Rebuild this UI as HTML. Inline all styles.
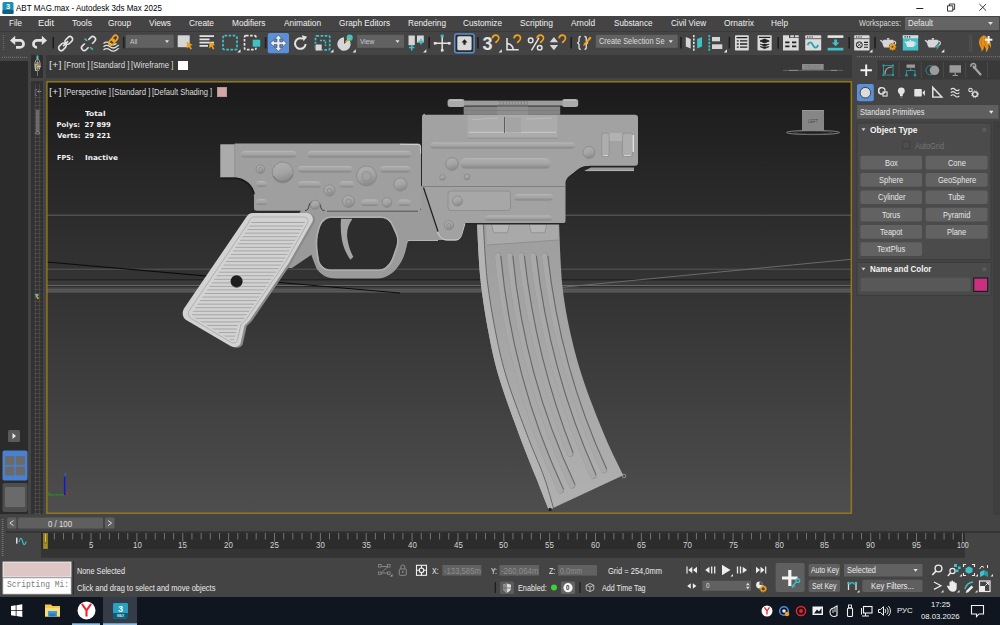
<!DOCTYPE html>
<html lang="en">
<head>
<meta charset="utf-8">
<title>ABT MAG.max - Autodesk 3ds Max 2025</title>
<style>
*{box-sizing:border-box;margin:0;padding:0}
html,body{width:1000px;height:625px;overflow:hidden;background:#444}
body{position:relative;font-family:"Liberation Sans",sans-serif;font-size:8.4px;color:#e6e6e6;line-height:1}
.a{position:absolute}
.t{position:absolute;white-space:pre;line-height:12px;height:12px;transform-origin:0 50%}
svg{position:absolute;overflow:visible}
</style>
</head>
<body>
<div class="a" style="left:0px;top:0px;width:1000px;height:16px;background:#fff;"></div>
<svg style="left:2px;top:2px;" width="12" height="12" viewBox="0 0 12 12"><rect x="0.5" y="0" width="11" height="12" rx="1.5" fill="#1c8fb4"/><rect x="0.5" y="8" width="11" height="4" rx="1" fill="#0f5f7d"/><text x="6" y="7.3" font-size="7.5" font-weight="700" fill="#fff" text-anchor="middle" font-family="Liberation Sans,sans-serif">3</text></svg>
<div class="t" style="left:16px;top:2.3px;font-size:8.6px;color:#000;transform:scaleX(0.932);">ABT MAG.max - Autodesk 3ds Max 2025</div>
<svg style="left:916px;top:3px;" width="72" height="9" viewBox="0 0 72 9"><path d="M0.300 5.500h7" stroke="#222" stroke-width="1" fill="none"/><path d="M31.500 2.800h5.300v5.300h-5.300zM33.300 2.800v-1.800h5.300v5.300h-1.800" stroke="#222" stroke-width="0.900" fill="none"/><path d="M63.400 1l6.700 6.700M70.100 1l-6.700 6.700" stroke="#222" stroke-width="0.900" fill="none"/></svg>
<div class="a" style="left:0px;top:16px;width:1000px;height:15px;background:#444;"></div>
<div class="a" style="left:0px;top:31px;width:1000px;height:1px;background:#3a3a3a;"></div>
<div class="t" style="left:9px;top:17.3px;font-size:8.5px;color:#f0f0f0;transform:scaleX(0.949);">File</div>
<div class="t" style="left:38px;top:17.3px;font-size:8.5px;color:#f0f0f0;transform:scaleX(1.092);">Edit</div>
<div class="t" style="left:72px;top:17.3px;font-size:8.5px;color:#f0f0f0;transform:scaleX(1.008);">Tools</div>
<div class="t" style="left:108px;top:17.3px;font-size:8.5px;color:#f0f0f0;transform:scaleX(0.974);">Group</div>
<div class="t" style="left:149px;top:17.3px;font-size:8.5px;color:#f0f0f0;transform:scaleX(0.977);">Views</div>
<div class="t" style="left:189px;top:17.3px;font-size:8.5px;color:#f0f0f0;transform:scaleX(0.980);">Create</div>
<div class="t" style="left:232px;top:17.3px;font-size:8.5px;color:#f0f0f0;transform:scaleX(0.971);">Modifiers</div>
<div class="t" style="left:283.5px;top:17.3px;font-size:8.5px;color:#f0f0f0;transform:scaleX(0.979);">Animation</div>
<div class="t" style="left:339px;top:17.3px;font-size:8.5px;color:#f0f0f0;transform:scaleX(0.973);">Graph Editors</div>
<div class="t" style="left:407.5px;top:17.3px;font-size:8.5px;color:#f0f0f0;transform:scaleX(0.969);">Rendering</div>
<div class="t" style="left:463px;top:17.3px;font-size:8.5px;color:#f0f0f0;transform:scaleX(0.971);">Customize</div>
<div class="t" style="left:520px;top:17.3px;font-size:8.5px;color:#f0f0f0;">Scripting</div>
<div class="t" style="left:571px;top:17.3px;font-size:8.5px;color:#f0f0f0;transform:scaleX(0.977);">Arnold</div>
<div class="t" style="left:613.5px;top:17.3px;font-size:8.5px;color:#f0f0f0;transform:scaleX(0.958);">Substance</div>
<div class="t" style="left:671px;top:17.3px;font-size:8.5px;color:#f0f0f0;transform:scaleX(0.954);">Civil View</div>
<div class="t" style="left:724px;top:17.3px;font-size:8.5px;color:#f0f0f0;transform:scaleX(0.992);">Ornatrix</div>
<div class="t" style="left:771px;top:17.3px;font-size:8.5px;color:#f0f0f0;transform:scaleX(0.972);">Help</div>
<div class="t" style="left:859px;top:17.5px;font-size:8.2px;color:#dcdcdc;transform:scaleX(0.889);">Workspaces:</div>
<div class="a" style="left:905px;top:17px;width:94px;height:13px;background:#646464;"></div>
<div class="t" style="left:908px;top:17.5px;font-size:8.2px;color:#e8e8e8;transform:scaleX(0.962);">Default</div>
<svg style="left:988px;top:22px;" width="6" height="4" viewBox="0 0 6 4"><path d="M0 0h5l-2.5 3z" fill="#e0e0e0"/></svg>
<div class="a" style="left:0px;top:61px;width:28px;height:453px;background:#2b2b2b;"></div>
<div class="a" style="left:31px;top:55px;width:12px;height:23px;background:#2e2e2e;"></div>
<div class="a" style="left:31px;top:81px;width:12px;height:433px;background:#323232;"></div>
<div class="a" style="left:46px;top:55px;width:806px;height:23px;background:#383838;"></div>
<svg style="left:0px;top:0px;" width="1000" height="60" viewBox="0 0 1000 60"><path d="M3.5 35v16" stroke="#6a6a6a" stroke-width="1.2" stroke-dasharray="1 1"/><g transform="translate(0 1.200)"><path d="M10 39.2l5.2 -4.6v3.2h4.8a4.9 4.9 0 0 1 0 9.8h-4v-2.7h4a2.2 2.2 0 0 0 0 -4.4h-4.8v3.3z" fill="#e2e2e2"/><path d="M47 39.2l-5.2 -4.6v3.2h-4.8a4.9 4.9 0 0 0 0 9.8h0v-2.7h0a2.2 2.2 0 0 1 0 -4.4h4.8v3.3z" fill="#e2e2e2"/><path d="M37 47.6v-2.7" stroke="#e2e2e2" stroke-width="0"/></g><rect x="52.5" y="37" width="1.6" height="11.5" fill="#1e1e1e"/><g transform="translate(0 1)"><g transform="translate(65.6 42.6) rotate(-45)" fill="none" stroke="#e2e2e2" stroke-width="1.65"><rect x="-8.8" y="-2.600" width="8.600" height="5.200" rx="2.600"/><rect x="0.2" y="-2.600" width="8.600" height="5.200" rx="2.600"/><path d="M-3.500 0h7"/></g><g transform="translate(88.5 42.600) rotate(-45)" fill="none" stroke="#e2e2e2" stroke-width="1.65"><path d="M-2.5 -2.700h-3.500a2.700 2.700 0 0 0 0 5.400h3.500M2.5 -2.700h3.500a2.700 2.700 0 0 1 0 5.400h-3.500"/></g><path d="M84.6 37.6l2.6 2.4M90.2 46.2l2.6 2.4" stroke="#3fc1c9" stroke-width="1.5"/><path d="M103.5 42.5c2.5 -2 4 -2 6.5 0s4 2 6.500 0M103.5 45.7c2.5 -2 4 -2 6.500 0s4 2 6.500 0s2 -1 2 -1M103.5 48.9c2.500 -2 4 -2 6.500 0s4 2 6.500 0s2 -1 2 -1" fill="none" stroke="#e2e2e2" stroke-width="1.3"/><g transform="translate(113.3 39.3) rotate(-50)" fill="none" stroke="#f0a21c" stroke-width="1.7"><rect x="-5.8" y="-2.3" width="6.6" height="4.6" rx="2.3"/><rect x="-0.8" y="-2.3" width="6.6" height="4.6" rx="2.3"/></g></g><rect x="122.9" y="37" width="1.6" height="11.5" fill="#1e1e1e"/><rect x="126" y="34.8" width="47.7" height="13" fill="#616161"/><path d="M165 40.2h4l-2 2.700z" fill="#e2e2e2"/><rect x="177.700" y="35.3" width="12" height="11.900" fill="#d6d6d6"/><path d="M186.8 41.8l6 3.300l-2.600 0.700l1.700 3l-1.400 0.800l-1.700 -3l-2 1.800z" fill="#f0a21c"/><path d="M199.500 36.200h14.500M199.500 39.400h10M199.500 42.600h14.500M199.500 45.800h8.500" stroke="#e2e2e2" stroke-width="1.700"/><path d="M209.3 41.8l6 3.300l-2.600 0.700l1.700 3l-1.400 0.800l-1.700 -3l-2 1.800z" fill="#f0a21c"/><rect x="223" y="35.700" width="14" height="14" rx="1.500" fill="none" stroke="#3fc1c9" stroke-width="1.700" stroke-dasharray="2.6 1.5"/><path d="M240.5 52.5h-3.2l3.2 -3.2z" fill="#e8e8e8"/><rect x="244.500" y="35.700" width="11.500" height="14" rx="1.500" fill="none" stroke="#e2e2e2" stroke-width="1.700" stroke-dasharray="2.6 1.5"/><rect x="251.700" y="38.700" width="9.500" height="9" fill="#444"/><rect x="252.700" y="39.700" width="7.500" height="7" fill="#3fc1c9"/><rect x="264.8" y="37" width="1.6" height="11.5" fill="#1e1e1e"/><rect x="267.800" y="33" width="21.200" height="20.200" rx="2" fill="#5b90d8"/><path d="M278.400 35l3.700 4h-2.300v2.800h2.800v-2.300l4 3.700l-4 3.700v-2.300h-2.800v2.800h2.300l-3.700 4l-3.700 -4h2.300v-2.800h-2.800v2.300l-4 -3.700l4 -3.700v2.300h2.800v-2.800h-2.300z" fill="#ededed" stroke="#3a4a66" stroke-width="0.700"/><path d="M305.600 44a5.300 5.300 0 1 1 -2.700 -5.100" fill="none" stroke="#e2e2e2" stroke-width="2"/><path d="M301.800 35.200l5.400 1.600l-3.600 4.400z" fill="#e2e2e2"/><rect x="315.500" y="35.800" width="14.200" height="14" rx="1" fill="none" stroke="#3fc1c9" stroke-width="1.700" stroke-dasharray="2.6 1.5"/><path d="M320 40.500h5.500v5.500" fill="none" stroke="#3fc1c9" stroke-width="1.500" stroke-dasharray="2 1.2"/><rect x="315" y="43.700" width="7.400" height="7" fill="#444"/><rect x="315.500" y="44.500" width="6.200" height="6" fill="#d6d6d6"/><path d="M333.5 52.5h-3.2l3.2 -3.2z" fill="#e8e8e8"/><path d="M344 44l5 -4.500a6.700 6.700 0 1 1 -5 -2.200z" fill="#d6d6d6"/><circle cx="349.700" cy="37.700" r="3.100" fill="#3fc1c9"/><path d="M345.500 42l4 -4" stroke="#f0a21c" stroke-width="1.500"/><path d="M355.8 52.5h-3.2l3.2 -3.2z" fill="#e8e8e8"/><rect x="357.200" y="34.800" width="46.800" height="13" fill="#616161"/><path d="M395.500 40.200h4l-2 2.700z" fill="#e2e2e2"/><rect x="408.500" y="35.500" width="6.300" height="9.700" fill="#d6d6d6"/><rect x="417" y="35.500" width="6.800" height="7" fill="#d6d6d6"/><path d="M409 47.600h5.400M411.700 44.800v5.600M418.300 41.600h5.400M421 38.800v5.600" stroke="#3fc1c9" stroke-width="1.500"/><path d="M426.3 52.5h-3.2l3.2 -3.2z" fill="#e8e8e8"/><rect x="428.4" y="37" width="1.6" height="11.5" fill="#1e1e1e"/><path d="M434.500 43.300h15.500M442.200 36v15" stroke="#e2e2e2" stroke-width="1.500"/><rect x="433.800" y="42" width="2.600" height="2.600" fill="#e2e2e2"/><rect x="448" y="42" width="2.600" height="2.600" fill="#e2e2e2"/><rect x="440.900" y="49" width="2.600" height="2.600" fill="#e2e2e2"/><rect x="440.700" y="34.600" width="3" height="3" fill="#3fc1c9"/><rect x="454.700" y="33.900" width="19.400" height="18.800" rx="2" fill="#2b2b2b" stroke="#5b90d8" stroke-width="1.500"/><rect x="457.300" y="36.300" width="14.300" height="14" rx="1.500" fill="#d9d9d9"/><path d="M464.500 39.300l3 3.200h-1.900v2.300h-2.200v-2.300h-1.900z" fill="#222"/><rect x="477.2" y="37" width="1.6" height="11.5" fill="#1e1e1e"/><text x="482.600" y="50.400" font-size="18" font-weight="700" fill="#e2e2e2" font-family="Liberation Sans,sans-serif">3</text><path d="M492.3 38.3c0.500 -3.800 6.500 -4.500 6.500 0c0 2 -1.500 2.600 -3.300 4.600" fill="none" stroke="#f0a21c" stroke-width="1.700"/><path d="M501.8 52.5h-3.2l3.2 -3.2z" fill="#e8e8e8"/><path d="M507 38v11.800h11.700M507 43.600a6.200 6.200 0 0 1 6.200 6.200" fill="none" stroke="#e2e2e2" stroke-width="1.600"/><path d="M514 38.3c0.500 -3.800 6.500 -4.500 6.500 0c0 2 -1.500 2.600 -3.300 4.600" fill="none" stroke="#f0a21c" stroke-width="1.700"/><circle cx="530.700" cy="40.400" r="2.300" fill="none" stroke="#e2e2e2" stroke-width="1.500"/><circle cx="539.700" cy="47.800" r="2.300" fill="none" stroke="#e2e2e2" stroke-width="1.500"/><path d="M531.500 50.300l7.500 -12.500" stroke="#e2e2e2" stroke-width="1.500"/><path d="M537 38.3c0.500 -3.800 6.500 -4.500 6.500 0c0 2 -1.500 2.600 -3.300 4.600" fill="none" stroke="#f0a21c" stroke-width="1.700"/><path d="M549.700 42.200l4.200 -5.200l4.200 5.200zM549.700 45l4.200 5.200l4.200 -5.200z" fill="#d6d6d6"/><path d="M559 38.3c0.500 -3.800 6.500 -4.500 6.500 0c0 2 -1.500 2.600 -3.300 4.600" fill="none" stroke="#f0a21c" stroke-width="1.700"/><rect x="570.4000000000001" y="37" width="1.6" height="11.5" fill="#1e1e1e"/><path d="M580.800 36.500c-2.500 0 -1.700 2.500 -1.700 4s-1.500 2.300 -2 2.300c0.500 0 2 0.800 2 2.300s-0.800 4.300 1.700 4.300M584.500 36.500c2.500 0 1.700 2.500 1.700 4s1.500 2.300 2 2.300c-0.500 0 -2 0.800 -2 2.300s0.800 4.300 -1.700 4.300" fill="none" stroke="#e2e2e2" stroke-width="1.300"/><path d="M583.800 43.700l6.200 -7.200l1.600 1.400l-6.200 7.200l-2.200 0.800z" fill="#f0a21c"/><rect x="595.800" y="34.800" width="81.900" height="13" fill="#616161"/><path d="M668.800 40.200h4l-2 2.700z" fill="#e2e2e2"/><rect x="680.2" y="37" width="1.6" height="11.5" fill="#1e1e1e"/><path d="M685.800 37l4.900 2v9.500l-4.900 -2z" fill="#d6d6d6"/><path d="M702 37l-4.900 2v9.500l4.900 -2z" fill="#3fc1c9"/><path d="M693.800 35v16" stroke="#e2e2e2" stroke-width="1.600" stroke-dasharray="2.200 1.200"/><path d="M709.300 35v16" stroke="#3fc1c9" stroke-width="1.700" stroke-dasharray="2.200 1.200"/><rect x="712" y="37" width="8" height="4.300" fill="#d6d6d6"/><rect x="712" y="44.300" width="10.300" height="4.700" fill="#d6d6d6"/><path d="M727 52.5h-3.2l3.2 -3.2z" fill="#e8e8e8"/><rect x="728.6" y="37" width="1.6" height="11.5" fill="#1e1e1e"/><rect x="735" y="35.300" width="13.800" height="15.200" rx="0.800" fill="#dadada"/><path d="M736.500 37.600h10.800M740 40.800h7.300M740 44h7.300M740 47.200h7.300M736.800 40.800h1.900M736.800 44h1.900M736.800 47.200h1.900" stroke="#222" stroke-width="1.300"/><rect x="757.500" y="35.300" width="14.200" height="15.200" rx="0.800" fill="#dadada"/><path d="M759 37.400h11.200" stroke="#222" stroke-width="1.200"/><path d="M764.600 39l4.600 2l-4.600 2l-4.600 -2zM760 44l4.600 2l4.600 -2M760 46.600l4.600 2l4.600 -2" fill="#222" stroke="#222" stroke-width="0.900"/><rect x="777.4000000000001" y="37" width="1.6" height="11.5" fill="#1e1e1e"/><path d="M783 35.300h6v2.600h9.700v12.600h-15.700z" fill="#dadada"/><rect x="790.300" y="35.300" width="3.600" height="2" fill="#dadada"/><rect x="794.900" y="35.300" width="3.800" height="2" fill="#dadada"/><path d="M785.200 42.400h4.300M792 42.400h4.300M785.200 46.400h4.300M792 46.400h4.300" stroke="#222" stroke-width="1.700"/><rect x="805.200" y="35.300" width="16" height="15.200" rx="0.800" fill="#dadada"/><path d="M805.200 38.700h16" stroke="#444" stroke-width="0.800"/><path d="M807 37h1.200M809.300 37h1.200M811.600 37h1.200" stroke="#222" stroke-width="1.200"/><path d="M807.500 45c1.800 -3.600 3.600 -3.600 5.400 0s3.600 3.600 5.400 0" fill="none" stroke="#22a5ae" stroke-width="1.800"/><rect x="827.600" y="35.300" width="15.800" height="2.600" fill="#e6e6e6"/><rect x="827.600" y="47.800" width="15.800" height="2.700" fill="#3fc1c9"/><path d="M834.200 39.500h2.800v3h2.400l-3.800 3.800l-3.800 -3.800h2.400z" fill="#3fc1c9"/><rect x="848.4000000000001" y="37" width="1.6" height="11.5" fill="#1e1e1e"/><rect x="854.200" y="35.300" width="15.300" height="15.200" rx="0.800" fill="#dadada"/><path d="M854.200 38.700h15.300" stroke="#444" stroke-width="0.800"/><path d="M856 37h1.200M858.300 37h1.200M860.600 37h1.200" stroke="#222" stroke-width="1.200"/><circle cx="859.300" cy="44.800" r="3" fill="none" stroke="#222" stroke-width="1"/><path d="M857.200 42.700l4.200 4.200M861.400 42.700l-4.200 4.200" stroke="#222" stroke-width="0.700"/><path d="M864 42.400h4M864 44.800h4M864 47.200h4" stroke="#222" stroke-width="1.100"/><path d="M872.5 52.5h-3.2l3.2 -3.2z" fill="#e8e8e8"/><rect x="874.2" y="37" width="1.6" height="11.5" fill="#1e1e1e"/><g transform="translate(879.8 35.6) scale(1.12)" fill="#d6d6d6"><path d="M3.300 3.600h8.400c1.300 1.800 1.300 4.600 -0.600 7h-7.200c-1.900 -2.400 -1.900 -5.200 -0.600 -7z"/><path d="M6.500 2.200h2v1.500h-2z"/><path d="M3.400 7.800l-3.400 -3.600l1 -0.600l3 2.200z"/><path d="M11.600 5.200c3.200 -1 3.400 3 0.300 3.800" fill="none" stroke="#d6d6d6" stroke-width="1.100"/></g><circle cx="892.500" cy="46.800" r="3.600" fill="#444"/><circle cx="892.500" cy="46.800" r="2.300" fill="none" stroke="#f0a21c" stroke-width="1.500"/><path d="M892.500 43v7.600M888.700 46.800h7.600M889.800 44.100l5.400 5.400M895.200 44.100l-5.400 5.400" stroke="#f0a21c" stroke-width="1.100"/><circle cx="892.500" cy="46.800" r="1" fill="#444"/><rect x="902.800" y="35.300" width="15.400" height="15.200" fill="#3fc1c9"/><rect x="902.800" y="35.300" width="15.400" height="3" fill="#dadada"/><path d="M904.500 36.800h1.200M906.800 36.800h1.200M909.100 36.800h1.200" stroke="#222" stroke-width="1.200"/><g transform="translate(904.3 38.2) scale(0.82)" fill="#e4e4e4"><path d="M3.300 3.600h8.400c1.300 1.800 1.300 4.600 -0.600 7h-7.200c-1.900 -2.400 -1.900 -5.200 -0.600 -7z"/><path d="M6.500 2.200h2v1.500h-2z"/><path d="M3.400 7.800l-3.400 -3.600l1 -0.600l3 2.200z"/><path d="M11.600 5.200c3.200 -1 3.400 3 0.300 3.800" fill="none" stroke="#e4e4e4" stroke-width="1.100"/></g><g transform="translate(924.5 35.6) scale(1.12)" fill="#d6d6d6"><path d="M3.300 3.600h8.400c1.300 1.800 1.300 4.600 -0.600 7h-7.200c-1.900 -2.400 -1.900 -5.200 -0.600 -7z"/><path d="M6.500 2.200h2v1.500h-2z"/><path d="M3.400 7.800l-3.400 -3.600l1 -0.600l3 2.200z"/><path d="M11.600 5.200c3.200 -1 3.400 3 0.300 3.800" fill="none" stroke="#d6d6d6" stroke-width="1.100"/></g><path d="M938.500 43l-3.600 4.300h2.200l-1.400 3.800l4.200 -5h-2.300l1.600 -3.100z" fill="#3fc1c9" stroke="#444" stroke-width="0.500"/><path d="M944.3 52.5h-3.2l3.2 -3.2z" fill="#e8e8e8"/><path d="M969.800 35v17M971.300 35v17" stroke="#5c5c5c" stroke-width="0.700"/><path d="M984 35.300c-4.500 1.500 -6 6.500 -4.200 10.500c1 2.300 2.200 3.200 1.700 6c2.200 -2 2.800 -4 2.200 -6.200c2 2 3 4.200 2 6.800c2.600 -2 3.600 -5.200 2.200 -8.200c1.600 1 2.600 2.600 2.700 4.200c1.200 -3 0.200 -6.200 -2 -8.800c-1.400 -1.800 -2.600 -3.300 -4.600 -4.300z" fill="#e8921a"/><path d="M982.500 37.500c-2 3 -1.500 6 0 9M985 37c-1.500 3 -0.500 6 1 9M987 38c0 2.500 1.500 4.500 2.500 6.500" fill="none" stroke="#b06a12" stroke-width="0.700"/><path d="M984.800 39.700h7.600M988.600 35.900v7.600" stroke="#f6f6f6" stroke-width="2"/></svg>
<div class="t" style="left:130px;top:35.9px;font-size:8px;color:#c4c9d6;transform:scaleX(0.821);">All</div>
<div class="t" style="left:360.3px;top:35.9px;font-size:8px;color:#c4c9d6;transform:scaleX(0.837);">View</div>
<div class="t" style="left:598.8px;top:36.0px;font-size:8.2px;color:#dedede;transform:scaleX(0.901);">Create Selection Se</div>
<svg style="left:0px;top:0px;" width="1000" height="60" viewBox="0 0 1000 60"><path d="M857 56.700h143" stroke="#707070" stroke-width="1.200" stroke-dasharray="1 1"/><path d="M2 57.300h26" stroke="#707070" stroke-width="1.200" stroke-dasharray="1 1"/></svg>
<div class="t" style="left:49.2px;top:59.3px;font-size:8.4px;color:#dedede;transform:scaleX(1.306);">[+]</div>
<div class="t" style="left:63.7px;top:59.3px;font-size:8.4px;color:#dedede;transform:scaleX(0.958);">[Front ]</div>
<div class="t" style="left:90.7px;top:59.3px;font-size:8.4px;color:#dedede;transform:scaleX(0.937);">[Standard ]</div>
<div class="t" style="left:130.7px;top:59.3px;font-size:8.4px;color:#dedede;transform:scaleX(0.929);">[Wireframe ]</div>
<div class="a" style="left:178px;top:60.6px;width:9.6px;height:9.8px;background:#fff;"></div>
<svg style="left:0px;top:0px;" width="1000" height="80" viewBox="0 0 1000 80"><path d="M783 70.400h60" stroke="#6c6c6c" stroke-width="0.800"/><path d="M789 70.400h9M831 70.400h6" stroke="#9a9a9a" stroke-width="0.800"/><rect x="802" y="64" width="21.700" height="5.800" fill="#8c8c8c"/><text x="812.800" y="68.800" font-size="4.500" fill="#777" text-anchor="middle" font-family="Liberation Sans,sans-serif">FRONT</text></svg>
<svg style="left:0px;top:0px;" width="60" height="520" viewBox="0 0 60 520"><rect x="36.500" y="55.500" width="2" height="3.500" fill="#3fc1c9"/><ellipse cx="37.500" cy="65" rx="2.600" ry="6" fill="none" stroke="#bdbdbd" stroke-width="0.900"/><path d="M37.500 59v17" stroke="#777" stroke-width="1"/><rect x="36.300" y="62" width="2.400" height="7" fill="#b89a58"/><text x="34.500" y="68.500" font-size="8" fill="#d8d8d8" font-family="Liberation Sans,sans-serif">[+</text><text x="34.500" y="94" font-size="8" fill="#d8d8d8" font-family="Liberation Sans,sans-serif">[+</text><path d="M35.500 84v430M39.500 84v430" stroke="#4a4a4a" stroke-width="0.800"/><path d="M37.500 97v417" stroke="#505050" stroke-width="7" stroke-dasharray="0.700 3.300"/><rect x="35.800" y="110" width="3.600" height="22" fill="#6a6a6a"/><ellipse cx="37.600" cy="133" rx="2" ry="1.300" fill="none" stroke="#999" stroke-width="0.700"/><path d="M34.500 294h4v2h-2.500z" fill="#3fc1c9"/><path d="M36 295.500l2.500 3.500" stroke="#f0a21c" stroke-width="1.300"/></svg>
<svg style="left:0px;top:0px;" width="1000" height="625" viewBox="0 0 1000 625"><defs><linearGradient id="sky" x1="0" y1="0" x2="0" y2="1"><stop offset="0" stop-color="#1a1a1a"/><stop offset="0.5" stop-color="#282828"/><stop offset="1" stop-color="#343434"/></linearGradient><linearGradient id="gnd" x1="0" y1="0" x2="0" y2="1"><stop offset="0" stop-color="#323232"/><stop offset="0.5" stop-color="#404040"/><stop offset="1" stop-color="#4e4e4e"/></linearGradient><linearGradient id="mg" x1="0" y1="0" x2="0" y2="1"><stop offset="0" stop-color="#9e9e9e"/><stop offset="1" stop-color="#b0b0b0"/></linearGradient><linearGradient id="sl" x1="0" y1="0" x2="0" y2="1"><stop offset="0" stop-color="#b0b0b0"/><stop offset="0.55" stop-color="#a4a4a4"/><stop offset="1" stop-color="#858585"/></linearGradient><linearGradient id="kn" x1="0" y1="0" x2="0.3" y2="1"><stop offset="0" stop-color="#b2b2b2"/><stop offset="0.6" stop-color="#a4a4a4"/><stop offset="1" stop-color="#8c8c8c"/></linearGradient></defs><rect x="46" y="81" width="806" height="204" fill="url(#sky)"/><rect x="46" y="285" width="806" height="229" fill="url(#gnd)"/><path d="M47 215.200h804" stroke="#686868" stroke-width="0.900"/><path d="M47 269.200h804" stroke="#5a5a5a" stroke-width="0.900"/><path d="M47 280h804" stroke="#141414" stroke-width="1.100"/><rect x="47" y="280.500" width="804" height="4.500" fill="#3a3a3a"/><rect x="47" y="285" width="804" height="1" fill="#686868"/><rect x="47" y="286" width="804" height="1.200" fill="#2c2c2c"/><rect x="47" y="287.200" width="804" height="1.800" fill="#464646"/><rect x="47" y="289" width="804" height="3.600" fill="#5a5a5a"/><rect x="47" y="290.300" width="804" height="0.700" fill="#4c4c4c"/><path d="M561 287.400l290 -28.100" stroke="#707070" stroke-width="0.900"/><path d="M47 262l353 31" stroke="#0c0c0c" stroke-width="1.100"/><path d="M477 223.5C477.6 232.9 478.5 261.4 480.5 280.0C482.5 298.6 485.8 318.3 489.0 335.0C492.2 351.7 494.6 362.8 499.8 380.0C505.1 397.2 514.5 422.3 520.5 438.4C526.5 454.5 531.0 464.9 535.7 476.8C540.4 488.7 546.6 504.5 548.8 510.0L623.3 475.3C620.4 469.1 612.2 453.4 605.8 438.4C599.4 423.3 590.6 401.4 585.0 385.0C579.4 368.6 575.8 356.3 572.0 340.0C568.2 323.7 564.7 306.7 562.5 287.0C560.3 267.3 559.6 232.8 559.0 222.0z" fill="url(#mg)"/><path d="M477 223.5C477.6 232.9 478.5 261.4 480.5 280.0C482.5 298.6 485.8 318.3 489.0 335.0C492.2 351.7 494.6 362.8 499.8 380.0C505.1 397.2 514.5 422.3 520.5 438.4C526.5 454.5 531.0 464.9 535.7 476.8C540.4 488.7 546.6 504.5 548.8 510.0L553.5 508C551.9 502.8 548.2 488.4 544.0 476.8C539.9 465.2 534.6 454.5 528.5 438.4C522.4 422.3 512.7 397.2 507.3 380.0C502.0 362.8 499.5 351.7 496.2 335.0C492.8 318.3 489.4 298.6 487.2 280.0C485.1 261.4 484.0 232.9 483.3 223.5z" fill="#b4b4b4"/><path d="M483.296 223.5C484.0 232.9 485.1 261.4 487.2 280.0C489.4 298.6 492.8 318.3 496.2 335.0C499.5 351.7 502.0 362.8 507.3 380.0C512.7 397.2 522.4 422.3 528.5 438.4C534.6 454.5 539.9 465.2 544.0 476.8C548.2 488.4 551.9 502.8 553.5 508.0" fill="none" stroke="#5e5e5e" stroke-width="0.900"/><path d="M498.0 255.5Q509.1 378.4 560.7 490.3" fill="none" stroke="#939393" stroke-width="6.400" stroke-linecap="round"/><path d="M497.5 255.5Q508.6 378.4 560.2 490.3" fill="none" stroke="#a9a9a9" stroke-width="5.200" stroke-linecap="round"/><path d="M500.9 256.0Q511.9 378.2 563.6 489.3" fill="none" stroke="#5a5a5a" stroke-width="0.800"/><path d="M510.0 255.5Q521.2 376.0 572.2 485.5" fill="none" stroke="#939393" stroke-width="6.400" stroke-linecap="round"/><path d="M509.5 255.5Q520.7 376.0 571.7 485.5" fill="none" stroke="#a9a9a9" stroke-width="5.200" stroke-linecap="round"/><path d="M512.9 256.0Q523.9 375.8 575.1 484.5" fill="none" stroke="#5a5a5a" stroke-width="0.800"/><path d="M521.5 255.5Q532.9 358.1 570.3 453.8" fill="none" stroke="#939393" stroke-width="6.400" stroke-linecap="round"/><path d="M521.0 255.5Q532.4 358.1 569.8 453.8" fill="none" stroke="#a9a9a9" stroke-width="5.200" stroke-linecap="round"/><path d="M524.4 256.0Q535.5 357.9 573.2 452.8" fill="none" stroke="#5a5a5a" stroke-width="0.800"/><path d="M533.5 255.5Q546.3 370.5 593.3 475.9" fill="none" stroke="#939393" stroke-width="6.400" stroke-linecap="round"/><path d="M533.0 255.5Q545.8 370.5 592.8 475.9" fill="none" stroke="#a9a9a9" stroke-width="5.200" stroke-linecap="round"/><path d="M536.4 256.0Q549.1 370.3 596.2 474.9" fill="none" stroke="#5a5a5a" stroke-width="0.800"/><path d="M545.0 255.5Q557.3 367.7 603.9 470.1" fill="none" stroke="#939393" stroke-width="6.400" stroke-linecap="round"/><path d="M544.5 255.5Q556.8 367.7 603.4 470.1" fill="none" stroke="#a9a9a9" stroke-width="5.200" stroke-linecap="round"/><path d="M547.9 256.0Q560.0 367.6 606.8 469.1" fill="none" stroke="#5a5a5a" stroke-width="0.800"/><path d="M486 224h72l1 16l-72 5z" fill="#a9a9a9"/><path d="M487 245l72 -5" stroke="#8a8a8a" stroke-width="0.800"/><path d="M491.500 224h18l-2 8.700h-14z" fill="#b4b4b4" stroke="#8a8a8a" stroke-width="0.700"/><path d="M529.200 224h17.600l-2 8.700h-13.600z" fill="#b4b4b4" stroke="#8a8a8a" stroke-width="0.700"/><path d="M300 211l-12 57h4l22 -15v-42z" fill="#9a9a9a"/><path d="M306 210h115v-24h10l12 54h-31.500c-3.500 0 -4 2.500 -5 7c-1.500 7 -3.500 13 -8 19c-5 7 -12 12.400 -21 12.400h-41c-9 0 -15 -3 -20 -10l-5 -13v-25z" fill="#9b9b9b"/><path d="M408 240.500h30" stroke="#c4c4c4" stroke-width="0.900"/><path d="M331 218.500H380.500C386 218.500 389 221 391 225L395.500 235C397 239 396.800 243 395.500 247L392 257C389.500 264 385 268.800 379 268.800H331C325 268.800 321.500 266 319.800 261L318.400 252C317.600 246 317.600 240 318.500 235L320 229C322 222 326 218.500 331 218.500Z" fill="#2c2c2c" stroke="#aeaeae" stroke-width="4.400" stroke-linejoin="round"/><path d="M331 218.500H380.500C386 218.500 389 221 391 225L395.500 235C397 239 396.800 243 395.500 247L392 257C389.500 264 385 268.800 379 268.800H331C325 268.800 321.500 266 319.800 261L318.400 252C317.600 246 317.600 240 318.500 235L320 229C322 222 326 218.500 331 218.500Z" fill="#2d2d2d" stroke="#1a1a1a" stroke-width="0.800"/><path d="M341.200 218.800h11.200c-4.500 7 -6 12 -5 20c1 7 3 13 6 18l-3 3c-4 -6 -7 -12 -8.500 -20c-1.200 -7 -1.500 -14 -0.900 -21z" fill="#a4a4a4"/><path d="M253 213h53c5 0 8 4 6.500 8.500l-24 42l-39 57l-5 5l-4 18c-1.500 3.500 -6 4.500 -10 2.500l-43.500 -25.500c-4.500 -2.500 -5.500 -7.500 -3 -12l62 -91c1.500 -2.500 3.500 -4.500 7 -4.500z" fill="#8a8a8a" transform="translate(2.200 0.800)"/><path d="M253 213h53c5 0 8 4 6.500 8.500l-24 42l-39 57l-5 5l-4 18c-1.500 3.500 -6 4.500 -10 2.500l-43.500 -25.500c-4.500 -2.500 -5.500 -7.500 -3 -12l62 -91c1.500 -2.500 3.500 -4.500 7 -4.500z" fill="#d2d2d2"/><path d="M254 217h49.500c3.500 0 5.500 2.500 4 6l-22 39l-39 57l-5.500 5.500l-3.700 16c-1 2.500 -3.500 3 -6 2l-40 -24c-3 -2 -3.500 -5 -2 -8l59 -87.500c1.500 -3.500 3 -6 5.700 -6z" fill="none" stroke="#b0b0b0" stroke-width="1"/><clipPath id="gc"><path d="M256 220h46c2.500 0 3.500 2 2.500 4l-21.500 38l-39 57l-6 5.500l-3.500 14.500c-0.500 1.500 -2 2 -3.500 1l-37 -22.500c-2 -1.500 -2.500 -3.500 -1.500 -5.500l56.500 -85c2 -4 3 -7 7 -7z"/></clipPath><g clip-path="url(#gc)"><path d="M210 270h60" stroke="none"/><path d="M185 222.5h125" stroke="#a6a6a6" stroke-width="1"/><path d="M185 226.05h125" stroke="#a6a6a6" stroke-width="1"/><path d="M185 229.6h125" stroke="#a6a6a6" stroke-width="1"/><path d="M185 233.15h125" stroke="#a6a6a6" stroke-width="1"/><path d="M185 236.7h125" stroke="#a6a6a6" stroke-width="1"/><path d="M185 240.25h125" stroke="#a6a6a6" stroke-width="1"/><path d="M185 243.8h125" stroke="#a6a6a6" stroke-width="1"/><path d="M185 247.35h125" stroke="#a6a6a6" stroke-width="1"/><path d="M185 250.9h125" stroke="#a6a6a6" stroke-width="1"/><path d="M185 254.45h125" stroke="#a6a6a6" stroke-width="1"/><path d="M185 258.0h125" stroke="#a6a6a6" stroke-width="1"/><path d="M185 261.55h125" stroke="#a6a6a6" stroke-width="1"/><path d="M185 265.1h125" stroke="#a6a6a6" stroke-width="1"/><path d="M185 268.65h125" stroke="#a6a6a6" stroke-width="1"/><path d="M185 272.2h125" stroke="#a6a6a6" stroke-width="1"/><path d="M185 275.75h125" stroke="#a6a6a6" stroke-width="1"/><path d="M185 279.3h125" stroke="#a6a6a6" stroke-width="1"/><path d="M185 282.85h125" stroke="#a6a6a6" stroke-width="1"/><path d="M185 286.4h125" stroke="#a6a6a6" stroke-width="1"/><path d="M185 289.95h125" stroke="#a6a6a6" stroke-width="1"/><path d="M185 293.5h125" stroke="#a6a6a6" stroke-width="1"/><path d="M185 297.05h125" stroke="#a6a6a6" stroke-width="1"/><path d="M185 300.6h125" stroke="#a6a6a6" stroke-width="1"/><path d="M185 304.15h125" stroke="#a6a6a6" stroke-width="1"/><path d="M185 307.7h125" stroke="#a6a6a6" stroke-width="1"/><path d="M185 311.25h125" stroke="#a6a6a6" stroke-width="1"/><path d="M185 314.8h125" stroke="#a6a6a6" stroke-width="1"/><path d="M185 318.35h125" stroke="#a6a6a6" stroke-width="1"/><path d="M185 321.9h125" stroke="#a6a6a6" stroke-width="1"/><path d="M185 325.45h125" stroke="#a6a6a6" stroke-width="1"/><path d="M185 329.0h125" stroke="#a6a6a6" stroke-width="1"/><path d="M185 332.55h125" stroke="#a6a6a6" stroke-width="1"/><path d="M185 336.1h125" stroke="#a6a6a6" stroke-width="1"/><path d="M185 339.65h125" stroke="#a6a6a6" stroke-width="1"/></g><circle cx="236.600" cy="281.200" r="6" fill="#1e1e1e"/><path d="M231.500 284.500a6 6 0 0 0 9 1.500" fill="none" stroke="#555" stroke-width="0.800"/><rect x="300" y="196" width="32" height="17" fill="#9b9b9b"/><path d="M220.500 144.500h14.300v-1h183c2 0 3.200 1 3.200 3v61c0 2.500 -1.500 3.500 -3.500 3.500h-92.500c-3 0 -3.500 -2 -4 -5a6 6 0 0 0 -11.500 0c-0.500 3 -1 5 -4 5h-48c-2.500 0 -3.500 -1 -3.500 -3v-11c0 -9 -8 -19 -19.500 -19.500h-14z" fill="#9f9f9f"/><rect x="220.500" y="144.500" width="14.300" height="32.700" fill="#ababab"/><path d="M234.800 144v33" stroke="#8a8a8a" stroke-width="0.800"/><path d="M220.500 178.300h15c10 0.500 17 8 18.500 16" fill="none" stroke="#1a1a1a" stroke-width="1.800"/><path d="M254.500 211.300h46" stroke="#2a2a2a" stroke-width="1.300"/><path d="M327 211.200h91" stroke="#555" stroke-width="1"/><path d="M305 210.500c3 0 3.500 -2 4 -5a6 6 0 0 1 11.500 0c0.500 3 1 5 4 5" fill="none" stroke="#3a3a3a" stroke-width="1"/><rect x="241.2" y="150.8" width="55.19999999999999" height="6.699999999999989" rx="3.3499999999999943" fill="url(#sl)"/><path d="M244.54999999999998 151.3h48.5" stroke="#b6b6b6" stroke-width="0.800"/><rect x="307.6" y="150.8" width="103.39999999999998" height="6.699999999999989" rx="3.3499999999999943" fill="url(#sl)"/><path d="M310.95000000000005 151.3h96.69999999999999" stroke="#b6b6b6" stroke-width="0.800"/><rect x="298" y="166" width="54.5" height="6.400000000000006" rx="3.200000000000003" fill="url(#sl)"/><path d="M301.2 166.5h48.099999999999994" stroke="#b6b6b6" stroke-width="0.800"/><rect x="380" y="166" width="30.5" height="6.400000000000006" rx="3.200000000000003" fill="url(#sl)"/><path d="M383.2 166.5h24.099999999999994" stroke="#b6b6b6" stroke-width="0.800"/><rect x="298" y="181.2" width="22.80000000000001" height="6.400000000000006" rx="3.200000000000003" fill="url(#sl)"/><path d="M301.2 181.7h16.400000000000006" stroke="#b6b6b6" stroke-width="0.800"/><rect x="339.5" y="181.2" width="14.5" height="6.400000000000006" rx="3.200000000000003" fill="url(#sl)"/><path d="M342.7 181.7h8.099999999999994" stroke="#b6b6b6" stroke-width="0.800"/><rect x="256" y="181" width="11" height="6" rx="3.0" fill="url(#sl)"/><path d="M259.0 181.5h5" stroke="#b6b6b6" stroke-width="0.800"/><rect x="256" y="199" width="11" height="6" rx="3.0" fill="url(#sl)"/><path d="M259.0 199.5h5" stroke="#b6b6b6" stroke-width="0.800"/><rect x="361" y="199.5" width="17.5" height="6.5" rx="3.25" fill="url(#sl)"/><path d="M364.25 200.0h11.0" stroke="#b6b6b6" stroke-width="0.800"/><rect x="398" y="199.5" width="13" height="6.5" rx="3.25" fill="url(#sl)"/><path d="M401.25 200.0h6.5" stroke="#b6b6b6" stroke-width="0.800"/><circle cx="282.8" cy="172.5" r="10.5" fill="url(#kn)" stroke="#858585" stroke-width="0.800"/><path d="M273.500 176a10.500 10.500 0 0 0 19 -1" fill="none" stroke="#7e7e7e" stroke-width="1.200"/><circle cx="260.4" cy="169.2" r="4.3" fill="url(#kn)" stroke="#858585" stroke-width="0.800"/><circle cx="260.4" cy="169.2" r="1.935" fill="#a2a2a2" stroke="#868686" stroke-width="0.700"/><circle cx="366.5" cy="176" r="10" fill="url(#kn)" stroke="#858585" stroke-width="0.800"/><circle cx="366.5" cy="176" r="4.5" fill="#a2a2a2" stroke="#868686" stroke-width="0.700"/><circle cx="329.5" cy="190.5" r="5.5" fill="url(#kn)" stroke="#858585" stroke-width="0.800"/><circle cx="329.5" cy="190.5" r="2.475" fill="#a2a2a2" stroke="#868686" stroke-width="0.700"/><circle cx="348.5" cy="201.5" r="6" fill="url(#kn)" stroke="#858585" stroke-width="0.800"/><circle cx="348.5" cy="201.5" r="2.7" fill="#a2a2a2" stroke="#868686" stroke-width="0.700"/><circle cx="387" cy="202.5" r="4.8" fill="url(#kn)" stroke="#858585" stroke-width="0.800"/><circle cx="400.5" cy="184.5" r="6.5" fill="url(#kn)" stroke="#858585" stroke-width="0.800"/><circle cx="315.2" cy="204.8" r="4.6" fill="url(#kn)" stroke="#858585" stroke-width="0.800"/><path d="M400 144.300l18 0.300c2 0 2.600 1 2.600 3v6" fill="none" stroke="#cfcfcf" stroke-width="1"/><path d="M425 114.700h210c2 0 3 1 3 3v45c0 2 -1 3 -3 3h-44c-12 0 -14 5 -20 9c-4 3 -5.500 5 -5.500 9v37c0 1.500 -0.800 2.300 -2.300 2.300h-98.200l-4 13c-1 3 -3 4.500 -6 4.500h-8c-4 0 -7 -2 -8.500 -6l-15 -45.500h-1.500v-72c0 -2 1 -3.300 3 -3.300z" fill="#a2a2a2"/><path d="M421.800 186.500h143.700" stroke="#7c7c7c" stroke-width="0.900"/><path d="M423.500 187.500l14.500 44" stroke="#1c1c1c" stroke-width="1.200"/><path d="M591 167.500h43v3.500h-50z" fill="#9a9a9a"/><path d="M586 170.600h48" stroke="#b8b8b8" stroke-width="0.800"/><path d="M634 166.500h-43c-12 0 -14 5 -20 9" fill="none" stroke="#222" stroke-width="1"/><path d="M465 223.800h101" stroke="#262626" stroke-width="1.400"/><path d="M437.500 232c2 5 5 8 10 8h8c3 0 5 -1.500 6 -4.500l3.500 -12" fill="none" stroke="#d8d8d8" stroke-width="0.900"/><rect x="467.600" y="114.700" width="89.700" height="23.400" fill="#ababab"/><path d="M469 132.300h87" stroke="#c4c4c4" stroke-width="1.300"/><path d="M467.600 138.100h89.700" stroke="#8c8c8c" stroke-width="0.900"/><rect x="506" y="117.500" width="15" height="15" fill="#a4a4a4"/><path d="M504.500 117v16" stroke="#555" stroke-width="0.900"/><path d="M472 119.500l26 -1.500M526 119l26 -1" stroke="#bcbcbc" stroke-width="1.100"/><rect x="463.700" y="106.500" width="96.500" height="8.300" fill="#858585"/><rect x="497" y="106.500" width="31" height="8.300" fill="#8e8e8e"/><path d="M463.700 110.500h96.500" stroke="#7a7a7a" stroke-width="0.700"/><rect x="447.600" y="99" width="17" height="8" rx="2.500" fill="#aaaaaa"/><rect x="562" y="99" width="16.200" height="8" rx="2.500" fill="#aaaaaa"/><rect x="464" y="100.600" width="98.500" height="5" fill="#9c9c9c"/><rect x="498" y="101.600" width="30" height="3" fill="#7c7c7c"/><path d="M498 103.100h30" stroke="#b0b0b0" stroke-width="2.200" stroke-dasharray="0.700 0.800"/><path d="M450 100.300h12M564 100.300h12" stroke="#c6c6c6" stroke-width="0.900"/><rect x="430" y="142.5" width="145" height="6.0" rx="3.0" fill="url(#sl)"/><path d="M433.0 143.0h139.0" stroke="#b6b6b6" stroke-width="0.800"/><rect x="460" y="158" width="91" height="10.5" rx="5.25" fill="url(#sl)"/><path d="M465.25 158.5h80.5" stroke="#b6b6b6" stroke-width="0.800"/><rect x="514" y="194" width="39" height="6.5" rx="3.25" fill="url(#sl)"/><path d="M517.25 194.5h32.5" stroke="#b6b6b6" stroke-width="0.800"/><rect x="485" y="215.5" width="67" height="5.0" rx="2.5" fill="url(#sl)"/><path d="M487.5 216.0h62.0" stroke="#b6b6b6" stroke-width="0.800"/><rect x="448" y="191" width="62.500" height="19.500" rx="3" fill="#a7a7a7" stroke="#8a8a8a" stroke-width="0.800"/><circle cx="457.5" cy="201" r="5" fill="url(#kn)" stroke="#858585" stroke-width="0.800"/><circle cx="452" cy="164" r="6.3" fill="url(#kn)" stroke="#858585" stroke-width="0.800"/><circle cx="442.5" cy="177.5" r="2.8" fill="url(#kn)" stroke="#858585" stroke-width="0.800"/><circle cx="467" cy="177" r="2.8" fill="url(#kn)" stroke="#858585" stroke-width="0.800"/><circle cx="589" cy="152.5" r="6" fill="url(#kn)" stroke="#858585" stroke-width="0.800"/><circle cx="448.9" cy="225.2" r="4.6" fill="url(#kn)" stroke="#858585" stroke-width="0.800"/><circle cx="448.9" cy="225.2" r="2.07" fill="#a2a2a2" stroke="#868686" stroke-width="0.700"/><rect x="601.700" y="133" width="7.500" height="23.500" rx="2.500" fill="#adadad" stroke="#8a8a8a" stroke-width="0.700"/><rect x="622.400" y="133" width="10.300" height="23.500" rx="2.500" fill="#adadad" stroke="#8a8a8a" stroke-width="0.700"/><rect x="609.500" y="133" width="12.500" height="8" fill="#b2b2b2"/><path d="M633.200 135v17" stroke="#ececec" stroke-width="1.300"/><path d="M603 155.500h5M624 155.500h7" stroke="#d8d8d8" stroke-width="0.900"/><circle cx="624" cy="476" r="1.800" fill="none" stroke="#aaa" stroke-width="0.700"/><circle cx="550" cy="509.500" r="1.800" fill="#222"/><ellipse cx="813" cy="132.500" rx="26.500" ry="2.100" fill="none" stroke="#8a8a8a" stroke-width="0.900"/><ellipse cx="813" cy="132.600" rx="19" ry="1.500" fill="none" stroke="#555" stroke-width="0.700"/><rect x="802" y="110" width="22" height="21" fill="#868686"/><rect x="802" y="110" width="22" height="1" fill="#979797"/><text x="813" y="123.200" font-size="5.800" fill="#4c4c5c" text-anchor="middle" font-family="Liberation Sans,sans-serif" textLength="10.500" lengthAdjust="spacingAndGlyphs">LEFT</text><path d="M64.600 495v-18.500" stroke="#1414d8" stroke-width="1.400"/><path d="M64 494.900h-15" stroke="#18a018" stroke-width="1.200" stroke-dasharray="1.600 0.600"/><text x="64.300" y="476.300" font-size="5.500" fill="#2a6ae8" font-family="Liberation Sans,sans-serif">z</text><text x="47.800" y="494.500" font-size="5.500" fill="#18a018" font-family="Liberation Sans,sans-serif">y</text><text x="65.300" y="495.300" font-size="5.500" fill="#d01818" font-family="Liberation Sans,sans-serif">x</text><rect x="46.900" y="81.800" width="804.400" height="431.400" fill="none" stroke="#94771f" stroke-width="1.500"/></svg>
<div class="t" style="left:49.2px;top:85.8px;font-size:8.4px;color:#dedede;transform:scaleX(1.306);">[+]</div>
<div class="t" style="left:63.7px;top:85.8px;font-size:8.4px;color:#dedede;transform:scaleX(0.924);">[Perspective ]</div>
<div class="t" style="left:112.2px;top:85.8px;font-size:8.4px;color:#dedede;transform:scaleX(0.937);">[Standard ]</div>
<div class="t" style="left:152.2px;top:85.8px;font-size:8.4px;color:#dedede;transform:scaleX(0.903);">[Default Shading ]</div>
<div class="a" style="left:217px;top:87px;width:9.5px;height:9.5px;background:#d3a5a5;border:1px solid #bd9494"></div>
<div class="t" style="left:84.5px;top:107.5px;font-size:6.9px;color:#f2f2f2;font-weight:700;font-family:'DejaVu Sans',sans-serif;transform:scaleX(1.087);">Total</div>
<div class="t" style="left:56.5px;top:119.2px;font-size:6.9px;color:#f2f2f2;font-weight:700;font-family:'DejaVu Sans',sans-serif;">Polys:</div>
<div class="t" style="left:84.5px;top:119.2px;font-size:6.9px;color:#f2f2f2;font-weight:700;font-family:'DejaVu Sans',sans-serif;">27 899</div>
<div class="t" style="left:56.5px;top:130.2px;font-size:6.9px;color:#f2f2f2;font-weight:700;font-family:'DejaVu Sans',sans-serif;transform:scaleX(1.012);">Verts:</div>
<div class="t" style="left:84.5px;top:130.2px;font-size:6.9px;color:#f2f2f2;font-weight:700;font-family:'DejaVu Sans',sans-serif;">29 221</div>
<div class="t" style="left:56.5px;top:152.0px;font-size:6.9px;color:#f2f2f2;font-weight:700;font-family:'DejaVu Sans',sans-serif;transform:scaleX(0.943);">FPS:</div>
<div class="t" style="left:84.5px;top:152.0px;font-size:6.9px;color:#f2f2f2;font-weight:700;font-family:'DejaVu Sans',sans-serif;transform:scaleX(1.062);">Inactive</div>
<div class="a" style="left:8px;top:430px;width:12px;height:12px;background:#5a5a5a;border-radius:1.500px"></div>
<svg style="left:0px;top:0px;" width="30" height="520" viewBox="0 0 30 520"><path d="M12.500 433l3.500 3l-3.500 3z" fill="#e8e8e8"/><rect x="2.500" y="450.500" width="25" height="30" rx="2" fill="#4a80d0"/><rect x="5" y="456" width="9.300" height="9" rx="1" fill="#6a6a6a"/><rect x="15.700" y="456" width="9.300" height="9" rx="1" fill="#6a6a6a"/><rect x="5" y="466.500" width="9.300" height="9" rx="1" fill="#6a6a6a"/><rect x="15.700" y="466.500" width="9.300" height="9" rx="1" fill="#6a6a6a"/><rect x="2.500" y="483" width="25" height="29" rx="2" fill="#4e4e4e"/><rect x="5" y="487" width="20" height="20" rx="1" fill="#6a6a6a"/></svg>
<svg style="left:0px;top:0px;" width="1000" height="625" viewBox="0 0 1000 625"><rect x="877" y="60.500" width="123" height="19" fill="#393939"/><path d="M876.8 62v16" stroke="#4a4a4a" stroke-width="1"/><path d="M899 62v16" stroke="#4a4a4a" stroke-width="1"/><path d="M921.2 62v16" stroke="#4a4a4a" stroke-width="1"/><path d="M943.5 62v16" stroke="#4a4a4a" stroke-width="1"/><path d="M965.7 62v16" stroke="#4a4a4a" stroke-width="1"/><path d="M987.5 62v16" stroke="#4a4a4a" stroke-width="1"/><path d="M860.500 70.300h11.400M866.200 64.600v11.400" stroke="#f4f4f4" stroke-width="1.900"/><rect x="883.500" y="65.500" width="9.500" height="9.500" fill="none" stroke="#2f9aa3" stroke-width="0.900"/><path d="M885 74c0 -4.500 2.500 -7 7 -7" fill="none" stroke="#aaa" stroke-width="1.200"/><rect x="882.5" y="64.5" width="2" height="2" fill="#2f9aa3"/><rect x="882.5" y="74" width="2" height="2" fill="#2f9aa3"/><rect x="892" y="64.5" width="2" height="2" fill="#2f9aa3"/><rect x="892" y="74" width="2" height="2" fill="#2f9aa3"/><rect x="906.500" y="64.500" width="8.500" height="3.300" fill="#9a9a9a"/><path d="M910.700 68v2.500M906.500 75v-4.500h8.500v4.500" fill="none" stroke="#2f9aa3" stroke-width="0.900"/><rect x="905.300" y="74" width="2.400" height="2.400" fill="#2f9aa3"/><rect x="913.800" y="74" width="2.400" height="2.400" fill="#2f9aa3"/><circle cx="930.500" cy="70.300" r="4.600" fill="none" stroke="#2e8c94" stroke-width="1"/><circle cx="934.500" cy="70.300" r="4.800" fill="#9c9c9c"/><rect x="949.500" y="65.200" width="11.500" height="7.500" fill="#9a9a9a"/><path d="M952.500 75.500h5.500M955.200 72.700v2.500" stroke="#9a9a9a" stroke-width="1.200"/><path d="M973.500 66.500l7 8" stroke="#a4a4a4" stroke-width="2.200" stroke-linecap="round"/><circle cx="973.300" cy="66" r="2.400" fill="none" stroke="#a4a4a4" stroke-width="1.400" stroke-dasharray="11 4" transform="rotate(160 973.300 66)"/><rect x="857" y="84" width="16.800" height="17.300" rx="2" fill="#5b90d8"/><circle cx="865.400" cy="92.700" r="5.300" fill="#dcdcdc" stroke="#333" stroke-width="0.900"/><circle cx="881.800" cy="90.800" r="3.200" fill="none" stroke="#e4e4e4" stroke-width="1.400"/><rect x="882" y="91" width="6" height="6" fill="#e4e4e4" stroke="#444" stroke-width="0.800"/><rect x="883.500" y="92.500" width="3" height="3" fill="#444"/><circle cx="881.800" cy="90.800" r="3.200" fill="none" stroke="#e4e4e4" stroke-width="1.200" stroke-dasharray="14 6"/><circle cx="901.300" cy="90.800" r="3.400" fill="#e4e4e4"/><path d="M899.500 93h3.600l-0.500 3h-2.600z" fill="#e4e4e4"/><path d="M900.200 97h2.200" stroke="#aaa" stroke-width="0.900"/><rect x="914.300" y="89" width="7.500" height="7.500" rx="0.800" fill="#e4e4e4"/><path d="M922.300 92.700l2.600 -2.600v5.800z" fill="#e4e4e4"/><path d="M932.800 87.500v9.500h9z" fill="none" stroke="#e4e4e4" stroke-width="1.500"/><path d="M934 96.200h6" stroke="#444" stroke-width="0.600" stroke-dasharray="0.800 0.800"/><path d="M950.800 89.500c1.500 -1.500 2.800 -1.500 4.300 0s2.800 1.500 4.300 0M950.800 92.700c1.500 -1.500 2.800 -1.500 4.300 0s2.800 1.500 4.300 0M950.800 95.900c1.500 -1.500 2.800 -1.500 4.300 0s2.800 1.500 4.300 0" fill="none" stroke="#e4e4e4" stroke-width="1.100"/><circle cx="970.500" cy="90" r="1.700" fill="none" stroke="#e4e4e4" stroke-width="1.100"/><circle cx="975" cy="94.200" r="2.400" fill="none" stroke="#e4e4e4" stroke-width="1.300"/><circle cx="975" cy="94.200" r="3.500" fill="none" stroke="#e4e4e4" stroke-width="0.900" stroke-dasharray="1 1.200"/><rect x="857" y="105" width="141.500" height="13.700" fill="#5f5f5f"/><path d="M989 110.800h4.400l-2.200 2.900z" fill="#e8e8e8"/><rect x="993" y="121" width="7" height="394" fill="#3e3e3e"/><rect x="857" y="123" width="134" height="136.600" fill="#4b4b4b" stroke="#3a3a3a" stroke-width="0.800"/><rect x="857" y="262.400" width="134" height="32.800" fill="#4b4b4b" stroke="#3a3a3a" stroke-width="0.800"/><path d="M861.500 128.300h4l-2 2.700zM861.500 267.700h4l-2 2.700z" fill="#d0d0d0"/><rect x="982.500" y="128" width="3.600" height="3.600" fill="#5c5c5c"/><rect x="982.500" y="267.400" width="3.600" height="3.600" fill="#5c5c5c"/><rect x="902.700" y="141.700" width="7" height="7" fill="#4e4e4e" stroke="#3c3c3c" stroke-width="0.800"/><rect x="860.400" y="155.8" width="61.600" height="13.700" rx="1.800" fill="#626262"/><rect x="925.600" y="155.8" width="62" height="13.700" rx="1.800" fill="#626262"/><rect x="860.400" y="173.1" width="61.600" height="13.700" rx="1.800" fill="#626262"/><rect x="925.600" y="173.1" width="62" height="13.700" rx="1.800" fill="#626262"/><rect x="860.400" y="190.4" width="61.600" height="13.700" rx="1.800" fill="#626262"/><rect x="925.600" y="190.4" width="62" height="13.700" rx="1.800" fill="#626262"/><rect x="860.400" y="207.7" width="61.600" height="13.700" rx="1.800" fill="#626262"/><rect x="925.600" y="207.7" width="62" height="13.700" rx="1.800" fill="#626262"/><rect x="860.400" y="225" width="61.600" height="13.700" rx="1.800" fill="#626262"/><rect x="925.600" y="225" width="62" height="13.700" rx="1.800" fill="#626262"/><rect x="860.400" y="242.3" width="61.600" height="13.700" rx="1.800" fill="#626262"/><rect x="860.400" y="277.600" width="110.200" height="13.800" fill="#585858" stroke="#4e4e4e" stroke-width="0.800"/><rect x="973.700" y="278" width="14" height="13.400" fill="#c9307f" stroke="#1e1e1e" stroke-width="1.200"/></svg>
<div class="t" style="left:860px;top:106.0px;font-size:8.8px;color:#e8e8e8;transform:scaleX(0.845);">Standard Primitives</div>
<div class="t" style="left:870px;top:124.0px;font-size:8.6px;color:#f4f4f4;font-weight:700;transform:scaleX(0.978);">Object Type</div>
<div class="t" style="left:870px;top:263.4px;font-size:8.6px;color:#f4f4f4;font-weight:700;transform:scaleX(0.933);">Name and Color</div>
<div class="t" style="left:914.5px;top:139.8px;font-size:8.6px;color:#757575;transform:scaleX(0.854);">AutoGrid</div>
<div class="t" style="left:884.8px;top:156.8px;font-size:8.8px;color:#e6e6e6;transform:scaleX(0.844);">Box</div>
<div class="t" style="left:947.7px;top:156.8px;font-size:8.8px;color:#e6e6e6;transform:scaleX(0.846);">Cone</div>
<div class="t" style="left:879.1px;top:174.1px;font-size:8.8px;color:#e6e6e6;transform:scaleX(0.853);">Sphere</div>
<div class="t" style="left:937.5px;top:174.1px;font-size:8.8px;color:#e6e6e6;transform:scaleX(0.849);">GeoSphere</div>
<div class="t" style="left:877.5px;top:191.4px;font-size:8.8px;color:#e6e6e6;transform:scaleX(0.849);">Cylinder</div>
<div class="t" style="left:948.2px;top:191.4px;font-size:8.8px;color:#e6e6e6;transform:scaleX(0.851);">Tube</div>
<div class="t" style="left:882.1px;top:208.7px;font-size:8.8px;color:#e6e6e6;transform:scaleX(0.846);">Torus</div>
<div class="t" style="left:942.9px;top:208.7px;font-size:8.8px;color:#e6e6e6;transform:scaleX(0.849);">Pyramid</div>
<div class="t" style="left:880.0px;top:226.0px;font-size:8.8px;color:#e6e6e6;transform:scaleX(0.848);">Teapot</div>
<div class="t" style="left:947.0px;top:226.0px;font-size:8.8px;color:#e6e6e6;transform:scaleX(0.853);">Plane</div>
<div class="t" style="left:877.1px;top:243.3px;font-size:8.8px;color:#e6e6e6;transform:scaleX(0.848);">TextPlus</div>
<svg style="left:0px;top:0px;" width="1000" height="625" viewBox="0 0 1000 625"><path d="M2.600 519v38" stroke="#777" stroke-width="1.600" stroke-dasharray="1 1"/><rect x="7.200" y="517.600" width="9.200" height="10.800" rx="1.500" fill="#5f5f5f"/><rect x="18" y="517.600" width="85" height="10.800" rx="1.500" fill="#5f5f5f"/><rect x="105" y="517.600" width="9.600" height="10.800" rx="1.500" fill="#5f5f5f"/><path d="M13.500 520.600l-3.600 2.500l3.600 2.500M108 520.600l3.600 2.500l-3.600 2.500" fill="none" stroke="#e0e0e0" stroke-width="1"/><rect x="6" y="531.400" width="994" height="1.200" fill="#2c2c2c"/><rect x="41" y="532.500" width="924" height="17" fill="#2c2c2c"/><rect x="41" y="549.300" width="924" height="8.400" fill="#343434"/><path d="M45.20 533v8.5M54.37 533v6.5M63.54 533v6.5M72.72 533v6.5M81.89 533v6.5M91.06 533v8.5M100.23 533v6.5M109.40 533v6.5M118.58 533v6.5M127.75 533v6.5M136.92 533v8.5M146.09 533v6.5M155.26 533v6.5M164.44 533v6.5M173.61 533v6.5M182.78 533v8.5M191.95 533v6.5M201.12 533v6.5M210.30 533v6.5M219.47 533v6.5M228.64 533v8.5M237.81 533v6.5M246.98 533v6.5M256.16 533v6.5M265.33 533v6.5M274.50 533v8.5M283.67 533v6.5M292.84 533v6.5M302.02 533v6.5M311.19 533v6.5M320.36 533v8.5M329.53 533v6.5M338.70 533v6.5M347.88 533v6.5M357.05 533v6.5M366.22 533v8.5M375.39 533v6.5M384.56 533v6.5M393.74 533v6.5M402.91 533v6.5M412.08 533v8.5M421.25 533v6.5M430.42 533v6.5M439.60 533v6.5M448.77 533v6.5M457.94 533v8.5M467.11 533v6.5M476.28 533v6.5M485.46 533v6.5M494.63 533v6.5M503.80 533v8.5M512.97 533v6.5M522.14 533v6.5M531.32 533v6.5M540.49 533v6.5M549.66 533v8.5M558.83 533v6.5M568.00 533v6.5M577.18 533v6.5M586.35 533v6.5M595.52 533v8.5M604.69 533v6.5M613.86 533v6.5M623.04 533v6.5M632.21 533v6.5M641.38 533v8.5M650.55 533v6.5M659.72 533v6.5M668.90 533v6.5M678.07 533v6.5M687.24 533v8.5M696.41 533v6.5M705.58 533v6.5M714.76 533v6.5M723.93 533v6.5M733.10 533v8.5M742.27 533v6.5M751.44 533v6.5M760.62 533v6.5M769.79 533v6.5M778.96 533v8.5M788.13 533v6.5M797.30 533v6.5M806.48 533v6.5M815.65 533v6.5M824.82 533v8.5M833.99 533v6.5M843.16 533v6.5M852.34 533v6.5M861.51 533v6.5M870.68 533v8.5M879.85 533v6.5M889.02 533v6.5M898.20 533v6.5M907.37 533v6.5M916.54 533v8.5M925.71 533v6.5M934.88 533v6.5M944.06 533v6.5M953.23 533v6.5M962.40 533v8.5" stroke="#7c7c7c" stroke-width="0.900"/><rect x="43" y="533" width="5" height="16" fill="#8f7a26"/><path d="M45.500 534v8" stroke="#d9bd4a" stroke-width="1"/><rect x="16" y="537.600" width="1.500" height="6" fill="#e0e0e0"/><path d="M19 542c1.200 -5 2.400 -5 3.600 -0.500s2.400 4 3.600 0" fill="none" stroke="#3fc1c9" stroke-width="1.100"/><rect x="3" y="562" width="68" height="15" fill="#dcc6c6" stroke="#f4f4f4" stroke-width="0.800"/><rect x="3" y="578" width="68" height="16" fill="#ffffff" stroke="#c8c8c8" stroke-width="0.800"/><path d="M73.500 561v34" stroke="#2e2e2e" stroke-width="1"/><path d="M381 566.500h7l-7 6.500h7" fill="none" stroke="#8a8a8a" stroke-width="0.900"/><rect x="378.5" y="564.5" width="2.600" height="2.600" fill="none" stroke="#8a8a8a" stroke-width="0.800"/><rect x="387.5" y="564.5" width="2.600" height="2.600" fill="none" stroke="#8a8a8a" stroke-width="0.800"/><rect x="378.5" y="572" width="2.600" height="2.600" fill="none" stroke="#8a8a8a" stroke-width="0.800"/><rect x="387.5" y="572" width="2.600" height="2.600" fill="none" stroke="#8a8a8a" stroke-width="0.800"/><path d="M392.500 576.500h-2.500l2.500 -2.500z" fill="#aaa"/><rect x="399.300" y="569" width="7" height="6.300" rx="0.800" fill="none" stroke="#8a8a8a" stroke-width="1"/><path d="M400.800 569v-2a2 2 0 0 1 4 0v2" fill="none" stroke="#8a8a8a" stroke-width="1"/><circle cx="402.800" cy="572" r="0.900" fill="#8a8a8a"/><rect x="416.500" y="565.300" width="10" height="10" fill="none" stroke="#f0f0f0" stroke-width="1.100"/><circle cx="421.500" cy="570.300" r="2.300" fill="none" stroke="#f0f0f0" stroke-width="1.100"/><path d="M421.500 565.500v3M421.500 572.300v3M416.700 570.300h3M423.500 570.300h3" stroke="#f0f0f0" stroke-width="1.100"/><rect x="442.4" y="565" width="39.0" height="10.600" fill="#616161"/><rect x="499.5" y="565" width="39.5" height="10.600" fill="#616161"/><rect x="558" y="565" width="39" height="10.600" fill="#616161"/><path d="M495.300 582v11M580 582v11" stroke="#1c1c1c" stroke-width="1.200"/><rect x="500" y="581.400" width="14" height="12.600" rx="1.500" fill="#5c5c5c"/><path d="M507 583.500l4 1.300v3c0 2.500 -2 4 -4 5c-2 -1 -4 -2.500 -4 -5v-3z" fill="#dcdcdc"/><path d="M507 583.500v9.300c-2 -1 -4 -2.500 -4 -5v-3z" fill="#8a8a8a"/><path d="M503 588h8" stroke="#5c5c5c" stroke-width="0.700"/><circle cx="554" cy="587.500" r="3" fill="#3ad23a"/><rect x="561" y="581.400" width="14" height="12.600" rx="1.500" fill="#646464"/><circle cx="568" cy="587.700" r="4.600" fill="#f6f6f6"/><path d="M590 583.500l3.800 1.800v4.400l-3.800 1.900l-3.800 -1.900v-4.400zM586.200 585.300l3.800 1.800l3.800 -1.800M590 587.100v4.500" fill="none" stroke="#d8d8d8" stroke-width="0.800"/><path d="M687 566.500v7" stroke="#ececec" stroke-width="1.200"/><path d="M692.300 566.700v6.600l-4 -3.300zM697 566.700v6.600l-4 -3.300z" fill="#ececec"/><path d="M709.500 566.700v6.600l-4.300 -3.300z" fill="#ececec"/><path d="M711.700 566.500v7M714.700 566.500v7" stroke="#ececec" stroke-width="1.300"/><path d="M722 564.800v10.400l8.500 -5.200z" fill="#ececec"/><path d="M733 576.500h-2.500l2.500 -2.500z" fill="#ececec"/><path d="M737.500 566.500v7M740.500 566.500v7" stroke="#ececec" stroke-width="1.300"/><path d="M742.700 566.700v6.600l4.300 -3.300z" fill="#ececec"/><path d="M756 566.700v6.600l4 -3.300zM760.500 566.700v6.600l4 -3.300z" fill="#ececec"/><path d="M765.700 566.500v7" stroke="#ececec" stroke-width="1.200"/><path d="M699.500 562v15M750.500 562v15" stroke="#3a3a3a" stroke-width="0.900"/><path d="M690.800 583.300v5.400l-3.600 -2.700zM692.800 583.300v5.400l3.600 -2.700z" fill="#ececec"/><rect x="702.300" y="580.700" width="48.700" height="10" fill="#616161"/><path d="M746 585.200l1.800 -2.400l1.800 2.400zM746 586.800l1.800 2.400l1.800 -2.400z" fill="#e0e0e0"/><circle cx="759.500" cy="585" r="3.400" fill="#ececec"/><path d="M759.500 585v-3.400a3.400 3.400 0 0 1 3.400 3.400z" fill="#555"/><circle cx="763.200" cy="588.800" r="2.300" fill="none" stroke="#f0a21c" stroke-width="1.300"/><circle cx="763.200" cy="588.800" r="3.300" fill="none" stroke="#f0a21c" stroke-width="0.900" stroke-dasharray="1 1.100"/><rect x="775.600" y="563" width="29" height="29" rx="2" fill="#5f5f5f"/><path d="M782 578h15.500M789.800 570v16" stroke="#f4f4f4" stroke-width="3.200"/><circle cx="797.800" cy="580.500" r="1.900" fill="none" stroke="#3fc1c9" stroke-width="1.300"/><path d="M796.300 582l-4.600 4.600M793.300 585l1.600 1.600M792 586.400l1.400 1.400" stroke="#3fc1c9" stroke-width="1.300"/><rect x="808.600" y="564" width="31.400" height="12.500" rx="1.500" fill="#5f5f5f"/><rect x="808.600" y="579.800" width="31.400" height="12.300" rx="1.500" fill="#5f5f5f"/><rect x="844" y="564" width="78.500" height="12.500" fill="#616161"/><path d="M913.500 569h4.200l-2.100 2.800z" fill="#e8e8e8"/><rect x="862.400" y="579.800" width="60.100" height="12.300" rx="1.500" fill="#5f5f5f"/><path d="M848.500 590v-6M856 590v-6" stroke="#e0e0e0" stroke-width="1.300"/><path d="M850 584.500c0.800 -2.500 3.600 -2.500 4.500 0" fill="none" stroke="#3fc1c9" stroke-width="1.100"/><circle cx="848.500" cy="583" r="1.300" fill="#3fc1c9"/><circle cx="856" cy="583" r="1.300" fill="#3fc1c9"/><path d="M859.500 592.500h-2.500l2.500 -2.500z" fill="#ececec"/><circle cx="938.500" cy="568.500" r="3.400" fill="none" stroke="#ececec" stroke-width="1.400"/><path d="M936 571l-3.700 4" stroke="#ececec" stroke-width="1.700"/><circle cx="952.500" cy="571" r="2.600" fill="none" stroke="#ececec" stroke-width="1.200"/><path d="M950.500 573l-2.700 3" stroke="#ececec" stroke-width="1.400"/><rect x="954" y="564" width="3" height="3" fill="#3fc1c9"/><rect x="958" y="566.500" width="2.600" height="2.600" fill="#3fc1c9"/><rect x="955.800" y="569.500" width="2.600" height="2.600" fill="#3fc1c9"/><path d="M962 576.500h-2.500l2.500 -2.500z" fill="#ececec"/><path d="M963.500 567v-2.500h2.500M972 564.500h2.500v2.500M974.500 573v2.500h-2.500M966 575.500h-2.500v-2.500" fill="none" stroke="#ececec" stroke-width="1.100"/><path d="M969 566.500l3.500 1.800v3.600l-3.500 1.800l-3.500 -1.800v-3.600z" fill="#3fc1c9"/><path d="M978 576.500h-2.500l2.500 -2.500z" fill="#ececec"/><path d="M980 572l4 -2v5l-4 2z" fill="#3fc1c9"/><path d="M984 570l4 2v5l-4 -2z" fill="#2a9aa2"/><path d="M979.500 569l2.500 -3l2 1.500M987.500 565v3" stroke="#ececec" stroke-width="1" fill="none"/><path d="M993 576.500h-2.500l2.500 -2.500z" fill="#ececec"/><path d="M934 582l7 3.700l-7 3.700" fill="none" stroke="#ececec" stroke-width="1.200"/><path d="M943.500 592.500h-2.500l2.500 -2.500z" fill="#ececec"/><path d="M949.500 585.500v-3a0.900 0.900 0 0 1 1.800 0v-1a0.900 0.900 0 0 1 1.800 0v1a0.900 0.900 0 0 1 1.800 0v1.200a0.900 0.900 0 0 1 1.800 0v4c0 2.500 -1.500 4 -4 4c-2 0 -3 -1 -4 -2.500l-1.800 -3c0.500 -1 1.500 -1 2.600 0.300z" fill="#ececec"/><path d="M959.500 592.500h-2.500l2.500 -2.500z" fill="#ececec"/><path d="M965 589c1 -4 4 -6.500 8 -7" fill="none" stroke="#3fc1c9" stroke-width="1.300"/><path d="M966.500 590.500l5 -5l1.800 1.800l-5 5l-2.600 0.800z" fill="#ececec"/><path d="M977.500 592.500h-2.500l2.500 -2.500z" fill="#ececec"/><rect x="979.500" y="581" width="10.500" height="10.500" fill="none" stroke="#ececec" stroke-width="1.200"/><rect x="979.500" y="586" width="5.500" height="5.500" fill="#ececec"/><path d="M985.500 585.500l3 -3M986 582.300h2.700v2.700" stroke="#ececec" stroke-width="1" fill="none"/></svg>
<div class="t" style="left:48px;top:518.0px;font-size:8.8px;color:#e0e0e0;transform:scaleX(0.892);">0 / 100</div>
<div class="t" style="left:44px;top:539.5px;font-size:5.5px;color:#d0b040;transform:scaleX(0.981);">0</div>
<div class="t" style="left:88.9px;top:539.1px;font-size:8.3px;color:#d4d4d4;transform:scaleX(0.953);">5</div>
<div class="t" style="left:132.5px;top:539.1px;font-size:8.3px;color:#d4d4d4;transform:scaleX(0.953);">10</div>
<div class="t" style="left:178.4px;top:539.1px;font-size:8.3px;color:#d4d4d4;transform:scaleX(0.953);">15</div>
<div class="t" style="left:224.2px;top:539.1px;font-size:8.3px;color:#d4d4d4;transform:scaleX(0.953);">20</div>
<div class="t" style="left:270.1px;top:539.1px;font-size:8.3px;color:#d4d4d4;transform:scaleX(0.953);">25</div>
<div class="t" style="left:316.0px;top:539.1px;font-size:8.3px;color:#d4d4d4;transform:scaleX(0.953);">30</div>
<div class="t" style="left:361.8px;top:539.1px;font-size:8.3px;color:#d4d4d4;transform:scaleX(0.953);">35</div>
<div class="t" style="left:407.7px;top:539.1px;font-size:8.3px;color:#d4d4d4;transform:scaleX(0.953);">40</div>
<div class="t" style="left:453.5px;top:539.1px;font-size:8.3px;color:#d4d4d4;transform:scaleX(0.953);">45</div>
<div class="t" style="left:499.4px;top:539.1px;font-size:8.3px;color:#d4d4d4;transform:scaleX(0.953);">50</div>
<div class="t" style="left:545.3px;top:539.1px;font-size:8.3px;color:#d4d4d4;transform:scaleX(0.953);">55</div>
<div class="t" style="left:591.1px;top:539.1px;font-size:8.3px;color:#d4d4d4;transform:scaleX(0.953);">60</div>
<div class="t" style="left:637.0px;top:539.1px;font-size:8.3px;color:#d4d4d4;transform:scaleX(0.953);">65</div>
<div class="t" style="left:682.8px;top:539.1px;font-size:8.3px;color:#d4d4d4;transform:scaleX(0.953);">70</div>
<div class="t" style="left:728.7px;top:539.1px;font-size:8.3px;color:#d4d4d4;transform:scaleX(0.953);">75</div>
<div class="t" style="left:774.6px;top:539.1px;font-size:8.3px;color:#d4d4d4;transform:scaleX(0.953);">80</div>
<div class="t" style="left:820.4px;top:539.1px;font-size:8.3px;color:#d4d4d4;transform:scaleX(0.953);">85</div>
<div class="t" style="left:866.3px;top:539.1px;font-size:8.3px;color:#d4d4d4;transform:scaleX(0.953);">90</div>
<div class="t" style="left:912.1px;top:539.1px;font-size:8.3px;color:#d4d4d4;transform:scaleX(0.953);">95</div>
<div class="t" style="left:956.5px;top:539.1px;font-size:8.3px;color:#d4d4d4;transform:scaleX(0.852);">100</div>
<div class="t" style="left:6.5px;top:578.8px;font-size:8.3px;color:#7a7a7a;font-family:'Liberation Mono',monospace;transform:scaleX(0.958);">Scripting Mi:</div>
<div class="t" style="left:77px;top:565.0px;font-size:8.8px;color:#ececec;transform:scaleX(0.831);">None Selected</div>
<div class="t" style="left:77px;top:582.3px;font-size:8.8px;color:#ececec;transform:scaleX(0.850);">Click and drag to select and move objects</div>
<div class="t" style="left:431.8px;top:564.5px;font-size:8.6px;color:#e8e8e8;transform:scaleX(0.825);">X:</div>
<div class="t" style="left:491px;top:564.5px;font-size:8.6px;color:#e8e8e8;transform:scaleX(0.784);">Y:</div>
<div class="t" style="left:548.7px;top:564.5px;font-size:8.6px;color:#e8e8e8;transform:scaleX(0.824);">Z:</div>
<div class="t" style="left:444px;top:564.5px;font-size:8.4px;color:#8e8e8e;transform:scaleX(0.921);">-133,585m</div>
<div class="t" style="left:501px;top:564.5px;font-size:8.4px;color:#8e8e8e;transform:scaleX(0.934);">-260,064m</div>
<div class="t" style="left:560px;top:564.5px;font-size:8.4px;color:#8e8e8e;transform:scaleX(0.876);">0,0mm</div>
<div class="t" style="left:608px;top:564.5px;font-size:8.8px;color:#ececec;transform:scaleX(0.853);">Grid = 254,0mm</div>
<div class="t" style="left:517.6px;top:581.8px;font-size:8.8px;color:#ececec;transform:scaleX(0.829);">Enabled:</div>
<div class="t" style="left:566.3px;top:581.8px;font-size:7px;color:#333;font-weight:700;transform:scaleX(0.873);">0</div>
<div class="t" style="left:601.8px;top:582.0px;font-size:8.8px;color:#ececec;transform:scaleX(0.813);">Add Time Tag</div>
<div class="t" style="left:706px;top:579.8px;font-size:7.6px;color:#e0e0e0;transform:scaleX(0.828);">0</div>
<div class="t" style="left:810.5px;top:564.4px;font-size:8.8px;color:#ececec;transform:scaleX(0.784);">Auto Key</div>
<div class="t" style="left:812px;top:580.0px;font-size:8.8px;color:#ececec;transform:scaleX(0.795);">Set Key</div>
<div class="t" style="left:847px;top:564.4px;font-size:8.8px;color:#ececec;transform:scaleX(0.847);">Selected</div>
<div class="t" style="left:870.7px;top:580.0px;font-size:8.8px;color:#ececec;transform:scaleX(0.877);">Key Filters...</div>
<div class="a" style="left:0px;top:597px;width:1000px;height:28px;background:#10161f;"></div>
<svg style="left:0px;top:0px;" width="1000" height="625" viewBox="0 0 1000 625"><rect x="103" y="597" width="34" height="28" fill="#353c47"/><rect x="72" y="623.300" width="28" height="1.700" fill="#8ec1e8"/><rect x="103" y="623.300" width="34" height="1.700" fill="#8ec1e8"/><path d="M11 606l4.700 -0.700v4.900h-4.700zM16.500 605.200l5.800 -0.900v5.900h-5.800zM11 611h4.700v4.900l-4.700 -0.700zM16.500 611h5.800v5.900l-5.800 -0.900z" fill="#fff"/><path d="M45 604.500h6l1.500 1.500h7.500v10.500h-15z" fill="#f3c84b"/><rect x="45" y="608" width="15" height="8.500" fill="#f9dc7a"/><rect x="48" y="611" width="9" height="5.500" fill="#3b9ae0"/><rect x="49.500" y="613.500" width="6" height="3" fill="#10161f" opacity="0.250"/><circle cx="86.500" cy="610.500" r="9" fill="#fff"/><path d="M82 604l4.500 6.500v6M91 604l-4.500 6.500" fill="none" stroke="#f0222a" stroke-width="2.100"/><path d="M113 604.500c0 -1 0.500 -1.500 1.500 -1.500h12c1 0 1.500 0.500 1.500 1.500v12l-2 2h-11.500c-1 0 -1.500 -0.500 -1.500 -1.500z" fill="#27a2c2"/><path d="M113 613h15v3.500l-2 2h-11.500c-1 0 -1.500 -0.500 -1.500 -1.500z" fill="#0e5c78"/><text x="120.500" y="611.500" font-size="8.500" font-weight="700" fill="#fff" text-anchor="middle" font-family="Liberation Sans,sans-serif">3</text><text x="120.500" y="617.300" font-size="3.200" font-weight="700" fill="#cfe8f0" text-anchor="middle" font-family="Liberation Sans,sans-serif">MAX</text><circle cx="767" cy="611" r="5.500" fill="#fff"/><path d="M764.500 607.300l2.500 3.700v3.500M769.500 607.300l-2.500 3.700" fill="none" stroke="#f0222a" stroke-width="1.300"/><circle cx="784" cy="611" r="4.300" fill="none" stroke="#4a90e2" stroke-width="1.500"/><circle cx="784" cy="611" r="1.800" fill="#dfe8f5"/><circle cx="787" cy="614" r="2.300" fill="#f59a23"/><circle cx="801" cy="611" r="4.600" fill="none" stroke="#e8242c" stroke-width="1.500"/><circle cx="801" cy="611" r="2" fill="#e8242c"/><rect x="812.500" y="606.500" width="10.500" height="8.500" fill="#f2f2f2"/><path d="M814 613.500l3 -4l2 2l2.500 -3.500v5.500z" fill="#10161f"/><path d="M830.500 614.500c-1.500 -3 0 -6 3 -6.500l3.500 -2v9.500c-2 1.500 -5 1.500 -6.500 -1z" fill="none" stroke="#f2f2f2" stroke-width="1.100"/><path d="M833 613v-3.500M835 612v-4" stroke="#f2f2f2" stroke-width="0.900"/><rect x="847.500" y="608" width="5" height="8.500" rx="1" fill="none" stroke="#f2f2f2" stroke-width="1.100"/><rect x="848.500" y="605" width="3" height="3" fill="none" stroke="#f2f2f2" stroke-width="0.900"/><rect x="863.500" y="606.500" width="8.500" height="6.500" fill="none" stroke="#f2f2f2" stroke-width="1.100"/><path d="M862 616h7M865.500 613v3M861.500 608v6.500" stroke="#f2f2f2" stroke-width="1"/><path d="M878.500 609.500h2l3 -2.800v8.600l-3 -2.800h-2z" fill="none" stroke="#f2f2f2" stroke-width="1"/><path d="M885 609a3 3 0 0 1 0 4M886.700 607.500a5 5 0 0 1 0 7M888.400 606a7 7 0 0 1 0 10" fill="none" stroke="#f2f2f2" stroke-width="0.900"/><path d="M971.500 605.500h12v8.500h-4.500l-2.500 2.700v-2.700h-5z" fill="none" stroke="#f2f2f2" stroke-width="1.100"/></svg>
<div class="t" style="left:897px;top:605.0px;font-size:7.8px;color:#f4f4f4;">РУС</div>
<div class="t" style="left:930.7px;top:598.7px;font-size:8px;color:#f4f4f4;transform:scaleX(0.964);">17:25</div>
<div class="t" style="left:920.8px;top:611.0px;font-size:8px;color:#f4f4f4;transform:scaleX(0.964);">08.03.2026</div>
</body>
</html>
